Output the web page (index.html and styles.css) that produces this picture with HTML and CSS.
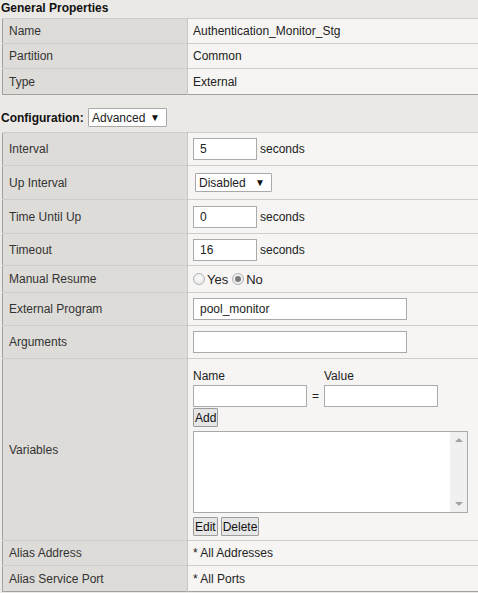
FILE: index.html
```html
<!DOCTYPE html>
<html>
<head>
<meta charset="utf-8">
<link rel="stylesheet" href="styles.css">
</head>
<body>
<div class="page">
  <div class="section-title">General Properties</div>
  <table class="props">
    <tr class="r25"><td class="lbl">Name</td><td class="val">Authentication_Monitor_Stg</td></tr>
    <tr class="r25"><td class="lbl">Partition</td><td class="val">Common</td></tr>
    <tr class="r26"><td class="lbl">Type</td><td class="val">External</td></tr>
  </table>

  <div class="config-bar">
    <span class="config-label">Configuration:</span>
    <span class="select sel-adv">Advanced <span class="arrow">▼</span></span>
  </div>

  <table class="props">
    <tr class="r33"><td class="lbl">Interval</td><td class="val"><span class="input in-short">5</span><span class="unit">seconds</span></td></tr>
    <tr class="r34"><td class="lbl">Up Interval</td><td class="val"><span class="select sel-dis">Disabled <span class="arrow">▼</span></span></td></tr>
    <tr class="r34"><td class="lbl">Time Until Up</td><td class="val"><span class="input in-short">0</span><span class="unit">seconds</span></td></tr>
    <tr class="r32"><td class="lbl">Timeout</td><td class="val"><span class="input in-short">16</span><span class="unit">seconds</span></td></tr>
    <tr class="r27"><td class="lbl">Manual Resume</td><td class="val">
      <span class="radio-group">
        <span class="radio"></span><span class="radio-text">Yes</span>
        <span class="radio checked"></span><span class="radio-text">No</span>
      </span>
    </td></tr>
    <tr class="r33"><td class="lbl">External Program</td><td class="val"><span class="input in-long">pool_monitor</span></td></tr>
    <tr class="r33"><td class="lbl">Arguments</td><td class="val"><span class="input in-long"></span></td></tr>
    <tr class="r182"><td class="lbl">Variables</td><td class="val vars">
      <div class="var-heads"><span class="vh-name">Name</span><span class="vh-value">Value</span></div>
      <div class="var-inputs"><span class="input in-mid"></span><span class="eq">=</span><span class="input in-mid"></span></div>
      <div class="btn-row"><span class="btn">Add</span></div>
      <div class="listbox">
        <div class="list-body"></div>
        <div class="scrollbar">
          <span class="sb-up"></span>
          <span class="sb-down"></span>
        </div>
      </div>
      <div class="btn-row btn-row2"><span class="btn">Edit</span><span class="btn">Delete</span></div>
    </td></tr>
    <tr class="r25"><td class="lbl">Alias Address</td><td class="val">* All Addresses</td></tr>
    <tr class="r26"><td class="lbl">Alias Service Port</td><td class="val">* All Ports</td></tr>
  </table>
</div>
</body>
</html>
```

FILE: styles.css
```css
html, body {
  margin: 0;
  padding: 0;
  overflow: hidden;
}
body {
  background: #ebe9e6;
  font-family: "Liberation Sans", Arial, sans-serif;
  font-size: 12px;
  color: #222;
  width: 478px;
  height: 593px;
}
.page {
  width: 478px;
}
.section-title {
  font-weight: bold;
  height: 18px;
  line-height: 15px;
  padding-top: 1px;
  box-sizing: border-box;
  padding-left: 1px;
  color: #111;
}
.props {
  border-collapse: collapse;
  margin-left: 2px;
  width: 476px;
  border: 1px solid #a3a19e;
  border-right: 0;
}
.props td {
  padding: 0;
  vertical-align: middle;
  border-top: 1px solid #cfcdca;
}
.props td.lbl {
  background: #dedcd8;
  width: 178px;
  padding-left: 6px;
  border-right: 1px solid #c9c7c4;
  color: #333;
}
.props td.val {
  background: #f6f5f3;
  padding-left: 5px;
  color: #222;
}
.r25 { height: 25px; }
.r26 { height: 26px; }
.r27 { height: 27px; }
.r32 { height: 32px; }
.r33 { height: 33px; }
.r34 { height: 34px; }
.r182 { height: 182px; }

.config-bar {
  display: flex;
  align-items: center;
  margin-top: 13px;
  height: 19px;
  margin-bottom: 5px;
  padding-left: 1px;
}
.config-label {
  font-weight: bold;
  color: #111;
  width: 87px;
}
.select {
  display: inline-flex;
  align-items: center;
  justify-content: space-between;
  box-sizing: border-box;
  background: #fff;
  border: 1px solid #a9a9a9;
  border-radius: 1px;
  padding: 0 6px 0 3px;
  color: #222;
}
.arrow {
  font-size: 10px;
  color: #111;
}
.sel-adv {
  width: 79px;
  height: 19px;
}
.sel-dis {
  width: 77px;
  height: 19px;
  margin-left: 2px;
}
.input {
  display: inline-flex;
  align-items: center;
  box-sizing: border-box;
  background: #fff;
  border: 1px solid #aaa;
  padding-left: 6px;
  color: #222;
  vertical-align: middle;
}
.in-short {
  width: 64px;
  height: 22px;
}
.in-long {
  width: 214px;
  height: 22px;
}
.in-mid {
  width: 114px;
  height: 22px;
}
.unit {
  margin-left: 3px;
  vertical-align: middle;
}
.radio-group {
  display: inline-flex;
  align-items: center;
  padding-top: 2px;
}
.radio {
  display: inline-block;
  box-sizing: border-box;
  width: 12px;
  height: 12px;
  border-radius: 50%;
  border: 1px solid #b4b4b4;
  background: radial-gradient(circle at 50% 40%, #fdfdfd, #e2e2e2);
  margin-right: 2px;
  position: relative;
}
.radio.checked::after {
  content: "";
  position: absolute;
  left: 2px;
  top: 2px;
  width: 6px;
  height: 6px;
  border-radius: 50%;
  background: #7a7a7a;
}
.radio-text {
  margin-right: 4px;
  font-size: 13px;
}
.vars {
  vertical-align: top !important;
  padding-top: 10px !important;
}
.var-heads {
  display: flex;
  height: 15px;
  line-height: 14px;
}
.vh-name {
  width: 131px;
}
.var-inputs {
  display: flex;
  align-items: center;
  height: 23px;
}
.eq {
  width: 17px;
  text-align: center;
}
.btn-row {
  display: flex;
  gap: 3px;
  margin-top: 1px;
}
.btn {
  display: inline-flex;
  align-items: center;
  box-sizing: border-box;
  height: 19px;
  padding: 0 1px;
  background: #e6e6e6;
  border: 1px solid #9d9d9d;
  border-radius: 1px;
  color: #111;
  font-size: 12px;
}
.listbox {
  display: flex;
  box-sizing: border-box;
  width: 275px;
  height: 82px;
  margin-top: 4px;
  border: 1px solid #aaa;
  background: #fff;
}
.list-body {
  flex: 1;
}
.scrollbar {
  width: 17px;
  background: #f0f0f0;
  display: flex;
  flex-direction: column;
  justify-content: space-between;
  align-items: center;
  padding: 6px 0;
}
.sb-up {
  width: 0;
  height: 0;
  border-left: 4px solid transparent;
  border-right: 4px solid transparent;
  border-bottom: 4px solid #a3a3a3;
}
.sb-down {
  width: 0;
  height: 0;
  border-left: 4px solid transparent;
  border-right: 4px solid transparent;
  border-top: 4px solid #a3a3a3;
}
.btn-row2 {
  margin-top: 4px;
}
```
